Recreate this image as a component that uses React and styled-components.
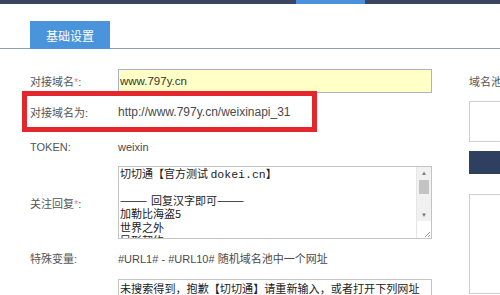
import React from "react";
import styled, { createGlobalStyle } from "styled-components";

const Global = createGlobalStyle`
  html, body { margin: 0; padding: 0; background: #fff; }
  body {
    width: 500px; height: 295px; overflow: hidden;
    font-family: "Liberation Sans", "Noto Sans CJK SC", sans-serif;
    color: #555;
  }
`;

const Page = styled.div`
  width: 500px;
  height: 295px;
  overflow: hidden;
  background: #fff;
`;

const TopBar = styled.div`
  height: 4px;
  background: #3b4463;
  display: flex;
`;

const NavActive = styled.div`
  margin-left: 296px;
  width: 69px;
  background: #4a90dc;
`;

const TabBar = styled.div`
  margin-top: 17px;
  padding-left: 30px;
  display: flex;
  border-bottom: 1px solid #8ea3a9;
`;

const Tab = styled.div`
  width: 80px;
  height: 28px;
  margin-bottom: -1px;
  background: #4a94dc;
  color: #fff;
  font-size: 12px;
  display: flex;
  align-items: center;
  justify-content: center;
  font-family: "Noto Sans CJK SC", sans-serif;
`;

const Main = styled.div`
  display: flex;
  padding-left: 30px;
  gap: 37px;
`;

const Form = styled.div`
  width: 402px;
  flex: none;
  display: flex;
  flex-direction: column;
`;

const Row = styled.div`
  position: relative;
  display: grid;
  grid-template-columns: 88px 314px;
  align-items: center;
  margin-top: ${(p) => p.$mt}px;
  height: ${(p) => (p.$h ? `${p.$h}px` : "auto")};
`;

const Label = styled.div`
  font-size: 11px;
  color: #555;
  white-space: nowrap;
`;

const Star = styled.span`
  color: #ee8888;
`;

const Value = styled.div`
  font-size: ${(p) => p.$fs || 11}px;
  color: #4a4a4a;
  white-space: nowrap;
`;

const Input = styled.div`
  box-sizing: border-box;
  height: 24px;
  background: #ffffc6;
  border: 1px solid #a6b5c9;
  font-size: 11.5px;
  color: #333;
  display: flex;
  align-items: center;
  padding-left: 1px;
`;

const Highlight = styled.div`
  position: absolute;
  left: -8px;
  top: -8px;
  width: 295px;
  height: 41px;
  box-sizing: border-box;
  border: 5px solid #e4272d;
  pointer-events: none;
`;

const TextBox = styled.div`
  box-sizing: border-box;
  height: ${(p) => p.$h}px;
  border: 1px solid #c4c4c4;
  display: flex;
  overflow: hidden;
  background: #fff;
`;

const TextContent = styled.div`
  flex: 1;
  overflow: hidden;
  padding: ${(p) => p.$pt || 0}px 0 0 1px;
  font-family: "Noto Sans CJK SC", sans-serif;
  font-size: ${(p) => p.$fs}px;
  line-height: ${(p) => p.$lh}px;
  color: #222;
  white-space: nowrap;
`;

const Line = styled.div`
  height: ${(p) => p.$lh}px;
`;

const Mono = styled.span`
  font-family: "Liberation Mono", monospace;
  font-size: 11.5px;
`;

const Dashes = styled.span`
  letter-spacing: 4px;
`;

const Scrollbar = styled.div`
  width: 14px;
  flex: none;
  display: flex;
  flex-direction: column;
  background: #f1f1f1;
  border-left: 1px solid #e6e6e6;
`;

const Arrow = styled.div`
  height: 12px;
  display: flex;
  align-items: center;
  justify-content: center;
  font-size: 6px;
  color: #777;
`;

const Thumb = styled.div`
  margin: 1px 2px 0;
  height: 14px;
  background: #c3c3c3;
`;

const Track = styled.div`
  flex: 1;
`;

const Grip = styled.div`
  height: 17px;
  background: #fff;
  display: flex;
  align-items: flex-end;
  justify-content: flex-end;
`;

const Side = styled.div`
  flex: 1;
  padding-top: 25px;
  display: flex;
  flex-direction: column;
  min-width: 0;
`;

const SideLabel = styled.div`
  font-size: 11px;
  height: 16px;
  line-height: 16px;
  color: #555;
  white-space: nowrap;
`;

const SideBox = styled.div`
  margin-top: ${(p) => p.$mt}px;
  height: ${(p) => p.$h}px;
  border: 1px solid #cfcfcf;
  border-right: none;
  box-sizing: border-box;
  background: #fff;
`;

const SideButton = styled.div`
  margin-top: 9px;
  height: 23px;
  background: #2e3f5f;
`;

export default function App() {
  return (
    <Page>
      <Global />
      <TopBar>
        <NavActive />
      </TopBar>
      <TabBar>
        <Tab>基础设置</Tab>
      </TabBar>
      <Main>
        <Form>
          <Row $mt={20} $h={24}>
            <Label>
              对接域名<Star>*</Star>:
            </Label>
            <Input>www.797y.cn</Input>
          </Row>
          <Row $mt={6} $h={26}>
            <Label>对接域名为:</Label>
            <Value $fs={12}>http://www.797y.cn/weixinapi_31</Value>
            <Highlight />
          </Row>
          <Row $mt={12} $h={20}>
            <Label>TOKEN:</Label>
            <Value>weixin</Value>
          </Row>
          <Row $mt={9} $h={73}>
            <Label>
              关注回复<Star>*</Star>:
            </Label>
            <TextBox $h={73}>
              <TextContent $fs={11} $lh={13.4}>
                <Line $lh={13.4}>
                  切切通【官方测试 <Mono>dokei.cn</Mono>】
                </Line>
                <Line $lh={13.4} />
                <Line $lh={13.4}>
                  <Dashes>———</Dashes>回复汉字即可<Dashes>———</Dashes>
                </Line>
                <Line $lh={13.4}>加勒比海盗5</Line>
                <Line $lh={13.4}>世界之外</Line>
                <Line $lh={13.4}>异形契约</Line>
              </TextContent>
              <Scrollbar>
                <Arrow>▲</Arrow>
                <Thumb />
                <Track />
                <Arrow>▼</Arrow>
                <Grip>
                  <svg width="8" height="8" viewBox="0 0 8 8">
                    <path d="M7 2 L2 7 M7 5 L5 7" stroke="#999" strokeWidth="1" />
                  </svg>
                </Grip>
              </Scrollbar>
            </TextBox>
          </Row>
          <Row $mt={9} $h={20}>
            <Label>特殊变量:</Label>
            <Value>#URL1# - #URL10# 随机域名池中一个网址</Value>
          </Row>
          <Row $mt={11} $h={40}>
            <Label />
            <TextBox $h={40}>
              <TextContent $fs={11.1} $lh={15} $pt={1}>
                <Line $lh={15}>未搜索得到，抱歉【切切通】请重新输入，或者打开下列网址</Line>
              </TextContent>
            </TextBox>
          </Row>
        </Form>
        <Side>
          <SideLabel>域名池</SideLabel>
          <SideBox $mt={11} $h={41} />
          <SideButton />
          <SideBox $mt={20} $h={100} />
        </Side>
      </Main>
    </Page>
  );
}
